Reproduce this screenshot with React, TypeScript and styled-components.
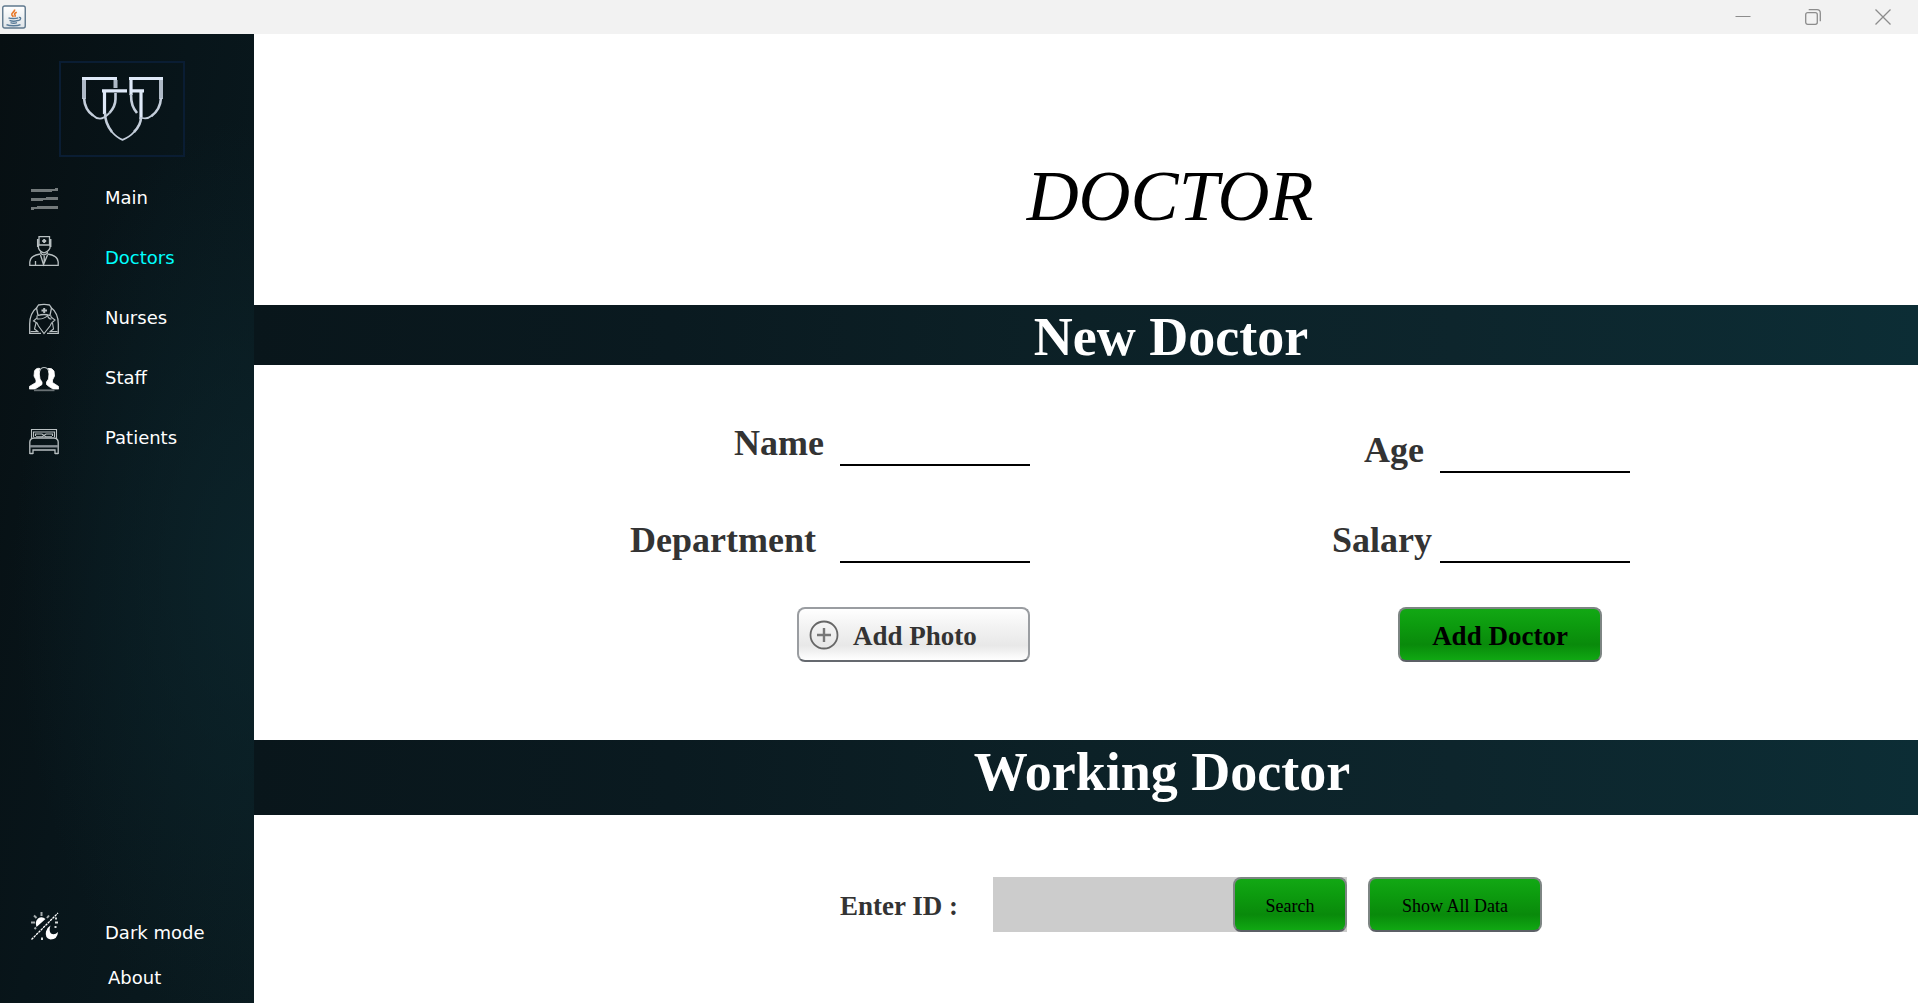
import React from "react";
import styled, { createGlobalStyle } from "styled-components";

const serif = `"Times New Roman", "Liberation Serif", serif`;
const sans = `"DejaVu Sans", Verdana, sans-serif`;

const GlobalStyle = createGlobalStyle`
  *, *::before, *::after { box-sizing: border-box; }
  body { margin: 0; background: #fff; font-family: ${serif}; }
  button, input { font: inherit; margin: 0; }
`;

const Window = styled.div`
  display: flex;
  flex-direction: column;
  min-height: 100vh;
`;

const TitleBar = styled.header`
  display: flex;
  align-items: center;
  justify-content: space-between;
  height: 34px;
  padding-left: 2px;
  background: #f2f2f2;
`;

const WindowControls = styled.div`
  display: flex;
  height: 100%;
`;

const ControlButton = styled.button`
  display: flex;
  align-items: center;
  justify-content: center;
  width: 70px;
  padding: 0;
  border: 0;
  background: transparent;
`;

const Body = styled.div`
  display: flex;
  flex: 1;
`;

const Sidebar = styled.aside`
  display: flex;
  flex-direction: column;
  flex: none;
  width: 254px;
  padding: 27px 0 3px;
  background:
    radial-gradient(ellipse 240px 460px at 100% 56%, rgba(12, 38, 45, 0.8), rgba(12, 38, 45, 0)),
    linear-gradient(100deg, #070f12 0%, #08151a 45%, #0a1b20 100%);
`;

const LogoBox = styled.div`
  width: 126px;
  height: 96px;
  margin: 0 0 11px 59px;
  border: 2px solid #0a1d33;
`;

const Nav = styled.nav`
  display: flex;
  flex-direction: column;
`;

const FooterNav = styled(Nav)`
  margin-top: auto;
`;

const NavItem = styled.a<{ $active?: boolean; $compact?: boolean }>`
  display: flex;
  align-items: center;
  gap: 46px;
  height: ${(p) => (p.$compact ? 45 : 60)}px;
  padding-left: 29px;
  color: ${(p) => (p.$active ? "#00ffff" : "#fff")};
  font-family: ${sans};
  font-size: 18px;
  line-height: 24px;
  text-decoration: none;

  svg { flex: none; }
`;

const IndentedItem = styled(NavItem)`
  padding-left: 108px;
`;

const Main = styled.main`
  flex: 1;
  min-width: 0;
  background: #fff;
`;

const PageTitle = styled.h1`
  margin: 0;
  padding: 122px 0 69px 168px;
  color: #000;
  font-family: ${serif};
  font-size: 72px;
  font-style: italic;
  font-weight: 400;
  line-height: 80px;
  text-align: center;
`;

const Band = styled.h2<{ $tall?: boolean }>`
  margin: 0;
  padding: 4px 0 ${(p) => (p.$tall ? 15 : 0)}px ${(p) => (p.$tall ? 152 : 170)}px;
  background: linear-gradient(90deg, #09161b 0%, #0a1a20 25%, #0c2127 50%, #0d252c 72%, #0c2d35 100%);
  color: #fff;
  font-size: 54px;
  font-weight: 700;
  line-height: 56px;
  text-align: center;
`;

const DoctorForm = styled.form`
  display: grid;
  grid-template-columns: 776fr 600fr 288fr;
  padding: 57px 0 78px;
`;

const Column = styled.div<{ $gap: number; $top?: number }>`
  display: flex;
  flex-direction: column;
  align-items: flex-end;
  padding-top: ${(p) => p.$top ?? 0}px;

  > div + div { margin-top: ${(p) => p.$gap}px; }
`;

const Field = styled.div<{ $gap: number }>`
  display: flex;
  gap: ${(p) => p.$gap}px;
  height: 44px;
`;

const FieldLabel = styled.label`
  color: #333;
  font-size: 36px;
  font-weight: 700;
  line-height: 43px;
`;

const LineInput = styled.input`
  width: 190px;
  padding: 0;
  border: 0;
  border-bottom: 2px solid #000;
  background: transparent;
  font-size: 27px;
  outline: none;
`;

const Button = styled.button<{ $width: number }>`
  display: flex;
  align-items: center;
  justify-content: center;
  flex: none;
  width: ${(p) => p.$width}px;
  height: 55px;
  padding: 2px 0 0;
  border: 2px solid #7d8583;
  border-bottom-color: #5c6066;
  border-radius: 8px;
  background: linear-gradient(#12a814 0%, #0d9c0f 30%, #098a0b 70%, #10a812 100%);
  color: #000;
  font-size: 18px;
  line-height: 24px;
`;

const SubmitButton = styled(Button)`
  margin: 44px 28px 0 0;
  font-size: 27px;
  font-weight: 700;
`;

const PhotoButton = styled(Button)`
  justify-content: flex-start;
  gap: 14px;
  margin-top: 44px;
  padding: 0 0 0 10px;
  border-color: #9a9da1;
  border-bottom-color: #65696f;
  background: linear-gradient(#fff 0%, #f4f4f4 30%, #e8e8e8 72%, #fff 100%);
  color: #333;
  font-size: 27px;
  font-weight: 700;

  span { padding-top: 2px; }
`;

const SearchForm = styled.form`
  display: grid;
  grid-template-columns: 586fr 1078fr;
  padding: 62px 0;
`;

const SearchRow = styled.div`
  display: flex;
  grid-column: 2;
  align-items: center;
`;

const SearchLabel = styled.label`
  width: 153px;
  padding-top: 2px;
  color: #333;
  font-size: 27px;
  font-weight: 700;
  line-height: 32px;
`;

const SearchBox = styled.div`
  display: flex;
  margin-right: 21px;
  background: #ccc;
`;

const SearchInput = styled.input`
  width: 240px;
  padding: 0 8px;
  border: 0;
  background: transparent;
  font-size: 27px;
  outline: none;
`;

const JavaIcon = () => (
  <svg width="24" height="24" viewBox="0 0 24 24" fill="none" aria-hidden="true">
    <defs>
      <linearGradient id="cup-tile" x1="0" y1="0" x2="0" y2="1">
        <stop offset="0" stopColor="#fff" />
        <stop offset="1" stopColor="#dfe4e8" />
      </linearGradient>
    </defs>
    <rect x="0.75" y="1" width="22.5" height="22" rx="2" fill="url(#cup-tile)" stroke="#5f788d" strokeWidth="1.4" />
    <path d="M12.500 4.500c1 2.200-3.600 3-2.600 5.300.4.800 1 1.200 1.500 2M14.800 7.300c-2.200.9-2.800 1.900-1.700 2.900.4.600 0 1-.4 1.500" stroke="#e8792b" strokeWidth="1.700" />
    <path d="M6.500 12.800c2 .9 7.500.9 9.700 0M7.500 15.400c2 .8 6.300.8 8.500 0M8.500 17.600c1.600.6 4.900.6 6.500 0M16.800 12.400c2.600-.5 2.500 2.500-.8 3.200M4.500 19.600c3 1.600 11 1.600 14 0" stroke="#587a98" strokeWidth="1.400" />
  </svg>
);

const Logo = () => (
  <svg width="122" height="92" viewBox="2 2 122 92" fill="none" aria-hidden="true">
    <g stroke="#dfe9f8" strokeWidth="3.200">
      <path d="M23 17.500H58M70 17.500H104" />
      <path d="M43 29.800H68M73 29.800H85" />
      <path d="M45.500 29.800V53M82 31V58" />
      <path d="M72 18V34" />
    </g>
    <g stroke="#aeb9c6" strokeWidth="4">
      <path d="M25 19V38M56.500 19V27M102 19V38" />
    </g>
    <g stroke="#c4cedb" strokeWidth="2.600">
      <path d="M25 37C25.500 45 29 51 34 54.500" />
      <path d="M56.500 32V38C56.500 44 54 48 50.500 52" />
      <path d="M102 37C101.500 45 98 51 92.500 55" />
      <path d="M72 33C72 43 74 47 78 52" />
      <path d="M46 52C46 61 49 66 53 71M82 56C82 62 79 67 75 71" />
    </g>
    <g stroke="#c4cedb" strokeWidth="1.800">
      <path d="M33.500 54C36 56.500 38 57.500 41 57.700C44 57.500 47 55.500 50.500 52" />
      <path d="M93 54.500C90 57 87 58 83.500 57" />
      <path d="M52.500 70.500C56 74.500 60 77.500 63.500 78.800C67 77.500 72 74.500 75.500 70.500" />
    </g>
  </svg>
);

const IconBox = ({ children }: { children: React.ReactNode }) => (
  <svg width="30" height="46" viewBox="0 0 30 46" fill="none" stroke="#b9c0c2" strokeWidth="1.3" aria-hidden="true">
    {children}
  </svg>
);

const MenuIcon = () => (
  <IconBox>
    <g fill="#737a7b" stroke="none">
      <path d="M2 14H26V13H29V16H23V17H2Z" />
      <path d="M2 23H17V22H29V25H14V26H2Z" />
      <path d="M2 32H8V31H29V34H5V35H2Z" />
    </g>
  </IconBox>
);

const DoctorIcon = () => (
  <IconBox>
    <path d="M10 10V1.700H20.500V10H10ZM9.500 9.500V13Q10.500 16.500 15 17.800Q19.500 16.500 21 13V9.500M8.600 4V12M21.800 4V12" />
    <path d="M15.200 4V8M13.200 6H17.200" strokeWidth="2" />
    <path d="M11.500 17L12.500 19L15 20L18 18.500L18.500 17M11.500 19Q1 20.500 .8 27V30.400H29.200V27Q29 20.500 18.500 19M11.500 20L14.500 29.500L18.500 20M15.200 21V29M6.500 26V30" />
  </IconBox>
);

const NurseIcon = () => (
  <IconBox>
    <path d="M9.500 10Q15 8.800 20.500 10L22.500 13L21 20.500Q15 18.500 9 20.500L7.500 13ZM8.500 12Q.7 18 .7 29V38.300H12M21.500 12Q29.300 18 29.300 29V38.300H18" />
    <path d="M15.200 13V18M12.500 15.500H18" strokeWidth="2" />
    <path d="M8 20.500V23L4.500 26L8 28L9.500 31L15 38.500L21 31L22.500 28L26 25L22 22V20.500M8 24Q15 24.500 18.500 20.500Q19.500 24 22.500 24M7 28L5.500 34L9.500 37M23.500 28L24.500 34L20.500 37M1.500 36.500H8M22 36.500H28.500" strokeWidth="1.100" />
  </IconBox>
);

const StaffIcon = () => (
  <IconBox>
    <path
      d="M11 13.500Q7 12.500 5.500 16L5 21L7 25V27.500L.3 31.500V34H6L10 31.500L13 29.500V27L11 24L10.300 19ZM19 13.500Q23 12.500 25 16L25.500 21L23.500 25V27.500L29.700 31.500V34H24L20 31.500L17.500 29.500V27L19.500 24L20 19Z"
      fill="#fff"
      stroke="#fff"
      strokeWidth="0.800"
    />
    <path d="M10.500 16Q12 12.500 15 12.500Q18.500 12.500 20 16" strokeWidth="1.200" />
    <path d="M5 35.300H25.500" stroke="#697174" strokeWidth="1.800" />
  </IconBox>
);

const BedIcon = () => (
  <IconBox>
    <path d="M2.500 24V14.500H27.500V24M4.500 22V17H25.500V22M6.500 21V19H13L15 20.500L17 19H23.500V21M7 21.800H13L15 20.800L17 21.800H23" strokeWidth="1.100" />
    <path d="M.8 39V27Q1 23.500 5 23H25Q29 23.500 29.200 27V39M4 39V35H26V39M.8 38.500H4M26 38.500H29.200" />
    <path d="M1 31.300H29" stroke="#858d93" strokeWidth="2.400" />
  </IconBox>
);

const DarkModeIcon = () => (
  <IconBox>
    <path d="M2.500 29.500L29 3" strokeDasharray="2.500 0.800" stroke="#fff" />
    <path d="M7.500 17Q5.500 11.500 9 8.500Q13 6 16.500 9Z" fill="#fff" stroke="none" />
    <path d="M12.500 2V6M2 12.500H6M5 5.500L7.500 8M20 5.500L18 8M5.500 19L7 17.500" stroke="#a4abac" strokeWidth="2" />
    <path d="M21.500 15.500Q19.500 21 22 23.500Q25.500 25.500 29 22Q28.500 29.500 21.500 29.500Q15.500 28 17 21.500Q18 17.500 21.500 15.500Z" fill="#fff" stroke="none" />
    <path d="M27 7.500V9.500M26 12.500H29M26.500 16V18M13 27.500V30" stroke="#d5dada" strokeWidth="2" />
  </IconBox>
);

const PlusCircleIcon = () => (
  <svg width="30" height="30" viewBox="0 0 30 30" fill="none" aria-hidden="true">
    <circle cx="15" cy="15" r="13.500" stroke="#666" strokeWidth="1.800" />
    <path d="M15 8V22M8 15H22" stroke="#777" strokeWidth="2.400" />
  </svg>
);

const navItems = [
  { label: "Main", icon: <MenuIcon /> },
  { label: "Doctors", icon: <DoctorIcon />, active: true },
  { label: "Nurses", icon: <NurseIcon /> },
  { label: "Staff", icon: <StaffIcon /> },
  { label: "Patients", icon: <BedIcon /> },
];

interface TextFieldProps {
  id: string;
  label: string;
  gap?: number;
}

const TextField = ({ id, label, gap = 16 }: TextFieldProps) => (
  <Field $gap={gap}>
    <FieldLabel htmlFor={id}>{label}</FieldLabel>
    <LineInput id={id} type="text" />
  </Field>
);

export default function App() {
  return (
    <Window>
      <GlobalStyle />
      <TitleBar>
        <JavaIcon />
        <WindowControls>
          <ControlButton type="button" aria-label="Minimize">
            <svg width="16" height="16" viewBox="0 0 16 16"><path d="M0.500 7.500H15.500" stroke="#8c8c8c" /></svg>
          </ControlButton>
          <ControlButton type="button" aria-label="Restore">
            <svg width="16" height="16" viewBox="0 0 16 16" fill="none" stroke="#8c8c8c" strokeWidth="1.300">
              <rect x="0.700" y="3.700" width="11.600" height="11.600" rx="2" />
              <path d="M3.700 .7H12Q15.300 .7 15.300 4V12.300" />
            </svg>
          </ControlButton>
          <ControlButton type="button" aria-label="Close">
            <svg width="16" height="16" viewBox="0 0 16 16"><path d="M0.500 0.500L15.500 15.500M15.500 0.500L0.500 15.500" stroke="#8c8c8c" strokeWidth="1.300" /></svg>
          </ControlButton>
        </WindowControls>
      </TitleBar>
      <Body>
        <Sidebar>
          <LogoBox><Logo /></LogoBox>
          <Nav aria-label="Sections">
            {navItems.map((item) => (
              <NavItem key={item.label} href="#" $active={item.active}>
                {item.icon}
                {item.label}
              </NavItem>
            ))}
          </Nav>
          <FooterNav aria-label="Preferences">
            <NavItem href="#" $compact>
              <DarkModeIcon />
              Dark mode
            </NavItem>
            <IndentedItem href="#" $compact>About</IndentedItem>
          </FooterNav>
        </Sidebar>
        <Main>
          <PageTitle>DOCTOR</PageTitle>
          <Band>New Doctor</Band>
          <DoctorForm onSubmit={(e) => e.preventDefault()}>
            <Column $gap={53}>
              <TextField id="name" label="Name" />
              <TextField id="department" label="Department" gap={24} />
              <PhotoButton type="button" $width={233}>
                <PlusCircleIcon />
                <span>Add Photo</span>
              </PhotoButton>
            </Column>
            <Column $gap={46} $top={7}>
              <TextField id="age" label="Age" />
              <TextField id="salary" label="Salary" gap={8} />
              <SubmitButton type="submit" $width={204}>Add Doctor</SubmitButton>
            </Column>
          </DoctorForm>
          <Band $tall>Working Doctor</Band>
          <SearchForm onSubmit={(e) => e.preventDefault()}>
            <SearchRow>
              <SearchLabel htmlFor="doctor-id">Enter ID :</SearchLabel>
              <SearchBox>
                <SearchInput id="doctor-id" type="text" />
                <Button type="submit" $width={114}>Search</Button>
              </SearchBox>
              <Button type="button" $width={174}>Show All Data</Button>
            </SearchRow>
          </SearchForm>
        </Main>
      </Body>
    </Window>
  );
}
